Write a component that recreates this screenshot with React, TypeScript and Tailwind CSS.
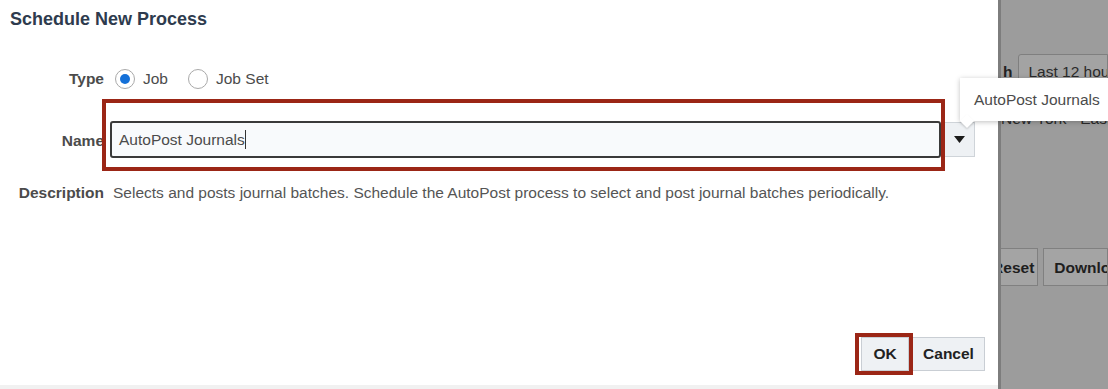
const Radio = ({ checked, label }: { checked?: boolean; label: string }) => (
  <label className="flex items-center gap-2">
    <span className="w-[20px] h-[20px] rounded-full border border-[#a9a9a9] bg-white flex items-center justify-center">
      {checked && <span className="w-[10px] h-[10px] rounded-full bg-[#1470d8]" />}
    </span>
    <span className="text-[#4b4b4b]">{label}</span>
  </label>
);

const App = () => {
  return (
    <div className="relative w-[1108px] h-[389px] flex bg-white overflow-hidden font-['Liberation_Sans',Arial,sans-serif] text-[15.5px]">
      {/* dialog */}
      <div className="w-[998px] h-[385px] flex flex-col bg-white">
        <h1 className="pl-[10px] pt-[6px] text-[18px] font-bold text-[#2e3b4e]">Schedule New Process</h1>

        <div className="flex items-center mt-[35px] h-[22px]">
          <span className="w-[104px] text-right font-bold text-[#4b4b4b]">Type</span>
          <div className="flex items-center gap-[20px] pl-[11px]">
            <Radio checked label="Job" />
            <Radio label="Job Set" />
          </div>
        </div>

        <div className="flex items-start mt-[9px]">
          <span className="w-[104px] mt-[30px] text-right font-bold text-[#4b4b4b] -mr-[2px] relative z-0">Name</span>
          <div className="border-[4px] border-[#9b2616] w-[843px] h-[72px] pl-[4px] pt-[18px] relative z-10">
            <div className="w-[831px] h-[37px] rounded-[3px] border-2 border-[#3a3a3a] bg-[#f8fafc] flex items-center pl-[7px] text-[#4b4b4b]">
              AutoPost Journals<span className="w-px h-[19px] bg-[#333]" />
            </div>
          </div>
          <button className="w-[31px] h-[35px] -ml-[1px] mt-[23px] bg-[#eef1f4] border border-[#cfd4d9] flex items-center justify-center">
            <svg width="11" height="7" viewBox="0 0 11 7"><path d="M0 0h11L5.5 7z" fill="#1b1b1b" /></svg>
          </button>
        </div>

        <div className="flex items-center mt-[10px]">
          <span className="w-[104px] text-right font-bold text-[#4b4b4b]">Description</span>
          <span className="pl-[9px] text-[#555]">
            Selects and posts journal batches. Schedule the AutoPost process to select and post journal batches periodically.
          </span>
        </div>

        <div className="flex-1" />

        <div className="flex justify-end items-center pr-[13px] pb-[10px]">
          <div className="border-[4px] border-[#9b2616] h-[42px] w-[58px] flex items-center justify-end relative z-10">
            <button className="h-[34px] w-[48px] bg-[#eef1f4] border border-[#c9ced4] font-bold text-[#222]">OK</button>
          </div>
          <button className="h-[34px] w-[73px] -ml-[1px] bg-[#eef1f4] border border-[#c9ced4] font-bold text-[#222]">Cancel</button>
        </div>
      </div>

      {/* background page behind overlay */}
      <div className="w-[110px] h-full bg-[#9c9c9c] border-l-[3px] border-[#7d7d7d] relative overflow-hidden">
        <div className="flex items-center mt-[54px] gap-[6px]">
          <span className="font-bold text-[#222] pl-[2px]">h</span>
          <div className="h-[35px] flex-1 border border-[#7f7f7f] rounded-l-[3px] bg-[#a3a3a3] flex items-center pl-[9px] text-[#2a2a2a] whitespace-nowrap overflow-hidden">
            Last 12 hours
          </div>
        </div>
        <div className="mt-[18px] whitespace-nowrap text-[#2a2a2a] overflow-hidden">New York - Eastern</div>
        <div className="flex gap-[5px] mt-[118px] -ml-[4px]">
          <div className="h-[38px] w-[45px] border border-[#808080] bg-[#a4a4a4] font-bold text-[#1e1e1e] flex items-center justify-end pr-[3px] overflow-hidden whitespace-nowrap">Reset</div>
          <div className="h-[38px] w-[70px] border border-[#808080] bg-[#a4a4a4] font-bold text-[#1e1e1e] flex items-center pl-[10px] whitespace-nowrap overflow-hidden">Download</div>
        </div>
      </div>

      {/* tooltip */}
      <div className="absolute left-[960px] top-[78px] w-[160px] h-[43px] bg-white shadow-[0_1px_5px_rgba(0,0,0,0.25)] flex items-center pl-[14px] text-[#4b4b4b] whitespace-nowrap">
        AutoPost Journals
        <span className="absolute left-[2px] -bottom-[5px] w-[10px] h-[10px] bg-white rotate-45 shadow-[1px_1px_2px_rgba(0,0,0,0.15)]" />
      </div>

      <div className="absolute left-0 bottom-0 w-[998px] h-[4px] bg-[#f1f1f1]" />
    </div>
  );
};

export default App;
